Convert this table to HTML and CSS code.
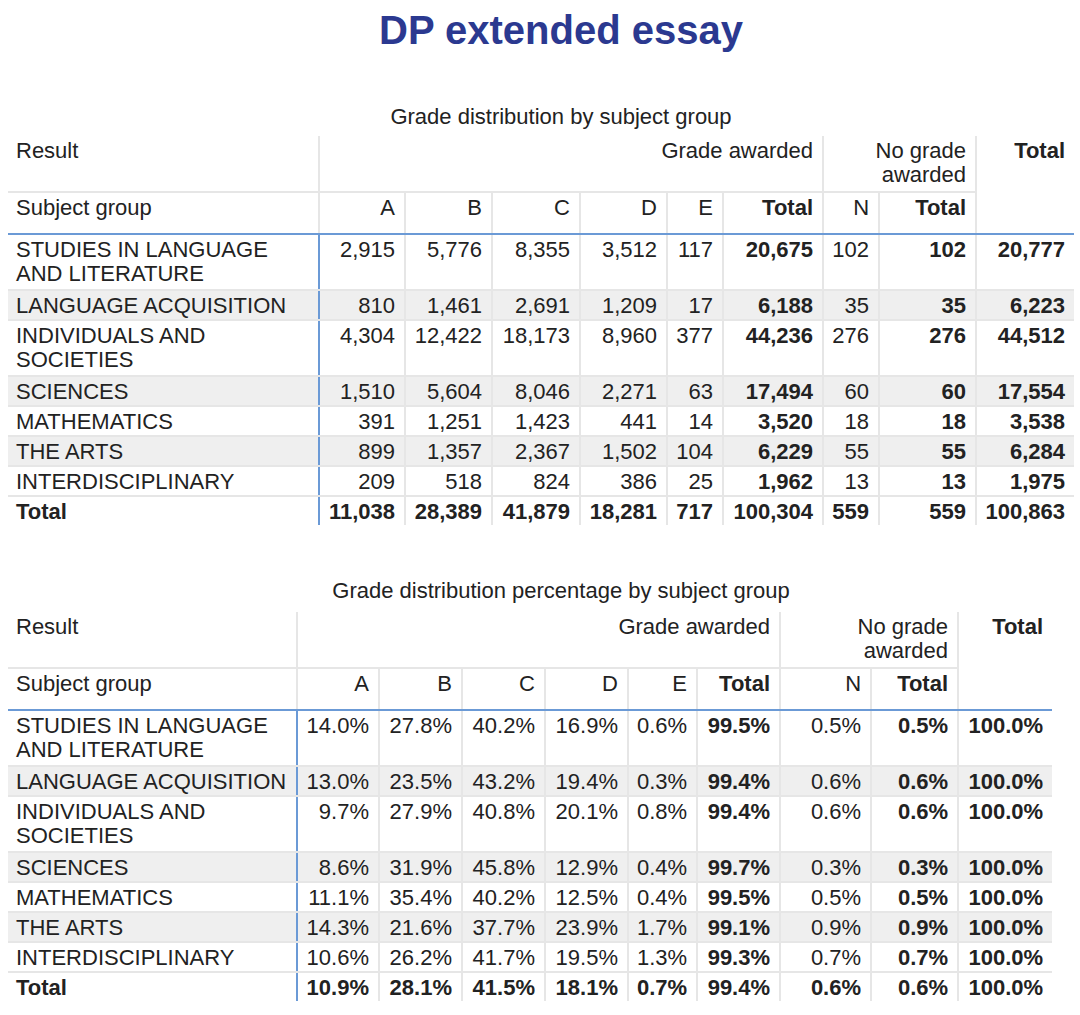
FILE: index.html
```html
<!DOCTYPE html>
<html lang="en">
<head>
<meta charset="utf-8">
<title>DP extended essay</title>
<link rel="stylesheet" href="styles.css">
</head>
<body>
<div class="page">
  <h1 class="title">DP extended essay</h1>

  <div class="caption">Grade distribution by subject group</div>
  <table class="grid t1">
    <colgroup>
      <col><col><col><col><col><col><col><col><col><col>
    </colgroup>
    <thead>
      <tr class="head1">
        <th class="rh">Result</th>
        <th colspan="6">Grade awarded</th>
        <th colspan="2">No grade awarded</th>
        <th rowspan="2" class="b tot last">Total</th>
      </tr>
      <tr class="head2">
        <th class="rh">Subject group</th>
        <th>A</th><th>B</th><th>C</th><th>D</th><th>E</th>
        <th class="b">Total</th>
        <th>N</th>
        <th class="b">Total</th>
      </tr>
    </thead>
    <tbody>
      <tr class="tall">
        <td class="rh">STUDIES IN LANGUAGE<br>AND LITERATURE</td>
        <td>2,915</td><td>5,776</td><td>8,355</td><td>3,512</td><td>117</td><td class="b">20,675</td><td>102</td><td class="b">102</td><td class="b">20,777</td>
      </tr>
      <tr class="alt">
        <td class="rh">LANGUAGE ACQUISITION</td>
        <td>810</td><td>1,461</td><td>2,691</td><td>1,209</td><td>17</td><td class="b">6,188</td><td>35</td><td class="b">35</td><td class="b">6,223</td>
      </tr>
      <tr class="tall">
        <td class="rh">INDIVIDUALS AND<br>SOCIETIES</td>
        <td>4,304</td><td>12,422</td><td>18,173</td><td>8,960</td><td>377</td><td class="b">44,236</td><td>276</td><td class="b">276</td><td class="b">44,512</td>
      </tr>
      <tr class="alt">
        <td class="rh">SCIENCES</td>
        <td>1,510</td><td>5,604</td><td>8,046</td><td>2,271</td><td>63</td><td class="b">17,494</td><td>60</td><td class="b">60</td><td class="b">17,554</td>
      </tr>
      <tr>
        <td class="rh">MATHEMATICS</td>
        <td>391</td><td>1,251</td><td>1,423</td><td>441</td><td>14</td><td class="b">3,520</td><td>18</td><td class="b">18</td><td class="b">3,538</td>
      </tr>
      <tr class="alt">
        <td class="rh">THE ARTS</td>
        <td>899</td><td>1,357</td><td>2,367</td><td>1,502</td><td>104</td><td class="b">6,229</td><td>55</td><td class="b">55</td><td class="b">6,284</td>
      </tr>
      <tr>
        <td class="rh">INTERDISCIPLINARY</td>
        <td>209</td><td>518</td><td>824</td><td>386</td><td>25</td><td class="b">1,962</td><td>13</td><td class="b">13</td><td class="b">1,975</td>
      </tr>
      <tr class="total">
        <td class="rh">Total</td>
        <td>11,038</td><td>28,389</td><td>41,879</td><td>18,281</td><td>717</td><td>100,304</td><td>559</td><td>559</td><td>100,863</td>
      </tr>
    </tbody>
  </table>

  <div class="caption caption-second">Grade distribution percentage by subject group</div>
  <table class="grid t2">
    <colgroup>
      <col><col><col><col><col><col><col><col><col><col>
    </colgroup>
    <thead>
      <tr class="head1">
        <th class="rh">Result</th>
        <th colspan="6">Grade awarded</th>
        <th colspan="2">No grade awarded</th>
        <th rowspan="2" class="b tot last">Total</th>
      </tr>
      <tr class="head2">
        <th class="rh">Subject group</th>
        <th>A</th><th>B</th><th>C</th><th>D</th><th>E</th>
        <th class="b">Total</th>
        <th>N</th>
        <th class="b">Total</th>
      </tr>
    </thead>
    <tbody>
      <tr class="tall">
        <td class="rh">STUDIES IN LANGUAGE<br>AND LITERATURE</td>
        <td>14.0%</td><td>27.8%</td><td>40.2%</td><td>16.9%</td><td>0.6%</td><td class="b">99.5%</td><td>0.5%</td><td class="b">0.5%</td><td class="b">100.0%</td>
      </tr>
      <tr class="alt">
        <td class="rh">LANGUAGE ACQUISITION</td>
        <td>13.0%</td><td>23.5%</td><td>43.2%</td><td>19.4%</td><td>0.3%</td><td class="b">99.4%</td><td>0.6%</td><td class="b">0.6%</td><td class="b">100.0%</td>
      </tr>
      <tr class="tall">
        <td class="rh">INDIVIDUALS AND<br>SOCIETIES</td>
        <td>9.7%</td><td>27.9%</td><td>40.8%</td><td>20.1%</td><td>0.8%</td><td class="b">99.4%</td><td>0.6%</td><td class="b">0.6%</td><td class="b">100.0%</td>
      </tr>
      <tr class="alt">
        <td class="rh">SCIENCES</td>
        <td>8.6%</td><td>31.9%</td><td>45.8%</td><td>12.9%</td><td>0.4%</td><td class="b">99.7%</td><td>0.3%</td><td class="b">0.3%</td><td class="b">100.0%</td>
      </tr>
      <tr>
        <td class="rh">MATHEMATICS</td>
        <td>11.1%</td><td>35.4%</td><td>40.2%</td><td>12.5%</td><td>0.4%</td><td class="b">99.5%</td><td>0.5%</td><td class="b">0.5%</td><td class="b">100.0%</td>
      </tr>
      <tr class="alt">
        <td class="rh">THE ARTS</td>
        <td>14.3%</td><td>21.6%</td><td>37.7%</td><td>23.9%</td><td>1.7%</td><td class="b">99.1%</td><td>0.9%</td><td class="b">0.9%</td><td class="b">100.0%</td>
      </tr>
      <tr>
        <td class="rh">INTERDISCIPLINARY</td>
        <td>10.6%</td><td>26.2%</td><td>41.7%</td><td>19.5%</td><td>1.3%</td><td class="b">99.3%</td><td>0.7%</td><td class="b">0.7%</td><td class="b">100.0%</td>
      </tr>
      <tr class="total">
        <td class="rh">Total</td>
        <td>10.9%</td><td>28.1%</td><td>41.5%</td><td>18.1%</td><td>0.7%</td><td>99.4%</td><td>0.6%</td><td>0.6%</td><td>100.0%</td>
      </tr>
    </tbody>
  </table>
</div>
</body>
</html>
```

FILE: styles.css
```css
* {
  box-sizing: border-box;
}

body {
  margin: 0;
  background: #ffffff;
  color: #222222;
  font-family: "Liberation Sans", Arial, sans-serif;
}

.page {
  padding: 0 0 0 8px;
}

.title {
  margin: 0;
  padding: 7px 0 0 34px;
  font-size: 40px;
  line-height: 46px;
  font-weight: bold;
  color: #2b3990;
  text-align: center;
}

.caption {
  margin: 52px 0 7px;
  padding-left: 34px;
  font-size: 22px;
  line-height: 24px;
  text-align: center;
}

.caption-second {
  margin-top: 54px;
  margin-bottom: 9px;
}

.grid {
  border-collapse: collapse;
  table-layout: fixed;
  font-size: 22px;
  line-height: 24px;
}

.t1 { width: 1066px; }
.t2 { width: 1044px; }

/* column widths, table 1 */
.t1 col:nth-child(1) { width: 311px; }
.t1 col:nth-child(2) { width: 86px; }
.t1 col:nth-child(3) { width: 87px; }
.t1 col:nth-child(4) { width: 88px; }
.t1 col:nth-child(5) { width: 87px; }
.t1 col:nth-child(6) { width: 56px; }
.t1 col:nth-child(7) { width: 100px; }
.t1 col:nth-child(8) { width: 56px; }
.t1 col:nth-child(9) { width: 97px; }
.t1 col:nth-child(10) { width: 98px; }

/* column widths, table 2 */
.t2 col:nth-child(1) { width: 289px; }
.t2 col:nth-child(2) { width: 82px; }
.t2 col:nth-child(3) { width: 83px; }
.t2 col:nth-child(4) { width: 83px; }
.t2 col:nth-child(5) { width: 83px; }
.t2 col:nth-child(6) { width: 69px; }
.t2 col:nth-child(7) { width: 83px; }
.t2 col:nth-child(8) { width: 91px; }
.t2 col:nth-child(9) { width: 87px; }
.t2 col:nth-child(10) { width: 94px; }

.grid th,
.grid td {
  padding: 3px 9px 1px 8px;
  vertical-align: top;
  font-weight: normal;
  text-align: right;
}

.grid .rh {
  text-align: left;
  white-space: nowrap;
}

.grid .b {
  font-weight: bold;
}

.head1 { height: 56px; }
.head2 { height: 42px; }
.grid tr.tall { height: 56px; }

/* header borders */
.grid thead th {
  border-right: 2px solid #e6e6e6;
}
.grid thead th.last {
  border-right: none;
}
.grid thead tr.head1 th {
  border-bottom: 2px solid #e6e6e6;
}
.grid thead tr.head1 th.tot,
.grid thead tr.head2 th {
  border-bottom: 2px solid #6b9ad6;
}

/* body borders */
.grid tbody td {
  border-right: 2px solid #e6e6e6;
  border-bottom: 2px solid #e6e6e6;
}
.grid tbody td:last-child {
  border-right: none;
}
.grid tbody td.rh {
  border-right: 2px solid #6b9ad6;
}
.grid tbody tr:last-child td {
  border-bottom: none;
}

.grid tbody tr.alt td {
  background: #efefef;
}

.grid tbody tr.total td {
  font-weight: bold;
}
```
